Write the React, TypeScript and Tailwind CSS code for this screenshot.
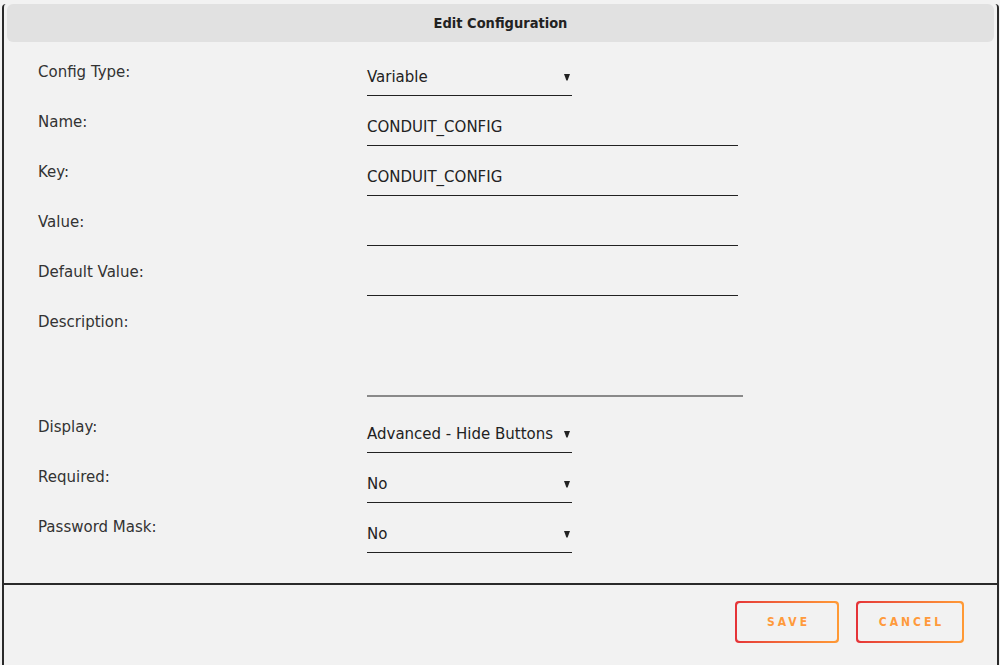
import React from "react";

type Field = {
  label: string;
  kind: "select" | "input" | "textarea";
  value?: string;
};

const fields: Field[] = [
  { label: "Config Type:", kind: "select", value: "Variable" },
  { label: "Name:", kind: "input", value: "CONDUIT_CONFIG" },
  { label: "Key:", kind: "input", value: "CONDUIT_CONFIG" },
  { label: "Value:", kind: "input" },
  { label: "Default Value:", kind: "input" },
  { label: "Description:", kind: "textarea" },
  { label: "Display:", kind: "select", value: "Advanced - Hide Buttons" },
  { label: "Required:", kind: "select", value: "No" },
  { label: "Password Mask:", kind: "select", value: "No" },
];

const Caret = () => (
  <svg width="6" height="8" viewBox="0 0 6 8" className="mr-[2px] shrink-0">
    <path d="M0 1 L6 1 L3.6 7.5 L2.4 7.5 Z" fill="#222" />
  </svg>
);

const FieldControl = ({ field, late }: { field: Field; late: boolean }) => {
  if (field.kind === "select") {
    return (
      <div className={late ? "pt-[14px]" : "pt-[12px]"}>
        <div className="flex w-[205px] items-center justify-between border-b border-[#222] pb-2">
          <span className="h-5 leading-5 text-[#222]">{field.value}</span>
          <Caret />
        </div>
      </div>
    );
  }
  if (field.kind === "textarea") {
    return (
      <div className="pt-[12px]">
        <div className="h-[80px] w-[376px] border-b-2 border-[#8a8a8a]" />
      </div>
    );
  }
  return (
    <div className="pt-[12px]">
      <div className="h-[29px] w-[371px] border-b border-[#222] pb-2 leading-5 text-[#222]">
        {field.value}
      </div>
    </div>
  );
};

export default function App() {
  return (
    <div className="min-h-[665px] bg-[#f2f2f2] pl-[2px] pr-[1px] pt-[2px]">
      <div
        className="min-h-[663px] rounded-tl-[4px] rounded-tr-[4px] border-l-2 border-r-2 border-[#2a2a2a] text-[15px] text-[#333]"
        style={{ fontFamily: '"DejaVu Sans", "Liberation Sans", sans-serif' }}
      >
        <div className="mx-[3px] mt-[2px] flex h-[38px] items-center justify-center rounded-[6px] bg-[#e1e1e1] pt-[2px]">
          <span
            className="text-[14.5px] font-bold text-[#222]"
            style={{ fontFamily: '"DejaVu Sans Condensed", "DejaVu Sans", sans-serif' }}
          >
            Edit Configuration
          </span>
        </div>

        <div className="pl-[34px] pt-[13px]">
          {fields.map((f, i) => (
            <div
              key={f.label}
              className={`flex ${f.kind === "textarea" ? "h-[105px]" : "h-[50px]"}`}
            >
              <div className="w-[329px] shrink-0 pt-[7px] leading-5">{f.label}</div>
              <FieldControl field={f} late={i > 5} />
            </div>
          ))}
        </div>

        <div className="mt-[23px] border-t-2 border-[#2a2a2a]" />

        <div className="flex justify-end gap-[17px] pr-[33px] pt-[16px]">
          <GradientButton label="SAVE" width="w-[104px]" />
          <GradientButton label="CANCEL" width="w-[108px]" />
        </div>
      </div>
    </div>
  );
}

const GradientButton = ({ label, width }: { label: string; width: string }) => (
  <div className={`${width} h-[42px] rounded-[4px] bg-gradient-to-r from-[#e53238] to-[#ff9a35] p-[2px]`}>
    <div
      className="flex h-full items-center justify-center rounded-[3px] bg-[#f2f2f2] pl-[3px] text-[12px] font-bold tracking-[0.25em] text-[#ff9a3c]"
      style={{ fontFamily: '"DejaVu Sans Condensed", "DejaVu Sans", sans-serif' }}
    >
      {label}
    </div>
  </div>
);
